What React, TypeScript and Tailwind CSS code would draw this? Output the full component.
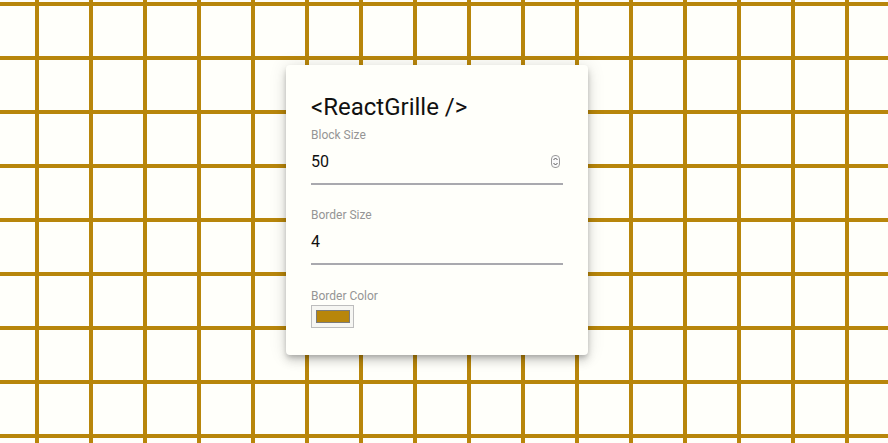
import React from "react";

function Spinner() {
  return (
    <svg width="9" height="13" viewBox="0 0 9 13" className="block">
      <rect x="0.5" y="0.5" width="8" height="12" rx="3.5" fill="#fafafa" stroke="#9a9a9a" />
      <path d="M2.5 5 L4.5 3 L6.5 5" fill="none" stroke="#555" strokeWidth="1" />
      <path d="M2.5 8 L4.5 10 L6.5 8" fill="none" stroke="#555" strokeWidth="1" />
    </svg>
  );
}

function Field({ label, value, spinner }: { label: string; value: string; spinner?: boolean }) {
  return (
    <div className="flex flex-col">
      <div className="h-[16px] text-[12px] leading-[16px] text-[#959595]">{label}</div>
      <div className="mt-[7px] h-[24px] flex items-center justify-between text-[16px] leading-[24px] text-[#111]">
        <span>{value}</span>
        {spinner && (
          <span className="mr-[3px] mt-[-2px]">
            <Spinner />
          </span>
        )}
      </div>
      <div className="mt-[9px] h-[2px] bg-[#a9a9ae]" />
    </div>
  );
}

export default function App() {
  return (
    <div className="w-[888px] h-[443px] overflow-hidden bg-[#fffffa] bg-[linear-gradient(to_right,#b8860b_4px,transparent_4px),linear-gradient(to_bottom,#b8860b_4px,transparent_4px)] bg-[length:54px_54px] bg-[position:35px_2px] font-['Roboto',sans-serif] pt-[65px] pl-[286px]">
      <div className="w-[302px] h-[290px] bg-[#fffffa] rounded-[4px] shadow-[0_3px_5px_-1px_rgba(0,0,0,0.2),0_6px_10px_0_rgba(0,0,0,0.14),0_1px_18px_0_rgba(0,0,0,0.12)] pt-[26px] px-[25px] flex flex-col">
        <div className="h-[32px] text-[24px] leading-[32px] text-[#111]">&lt;ReactGrille /&gt;</div>
        <div className="mt-[4px]">
          <Field label="Block Size" value="50" spinner />
        </div>
        <div className="mt-[22px]">
          <Field label="Border Size" value="4" />
        </div>
        <div className="mt-[23px] flex flex-col">
          <div className="h-[16px] text-[12px] leading-[16px] text-[#959595]">Border Color</div>
          <div className="mt-[1px] w-[43px] h-[23px] border border-[#bdbdbd] bg-[#f6f6f2] flex items-center pl-[4px]">
            <div className="w-[34px] h-[13px] border border-[#7a7a7a] bg-[#b8860b]" />
          </div>
        </div>
      </div>
    </div>
  );
}
